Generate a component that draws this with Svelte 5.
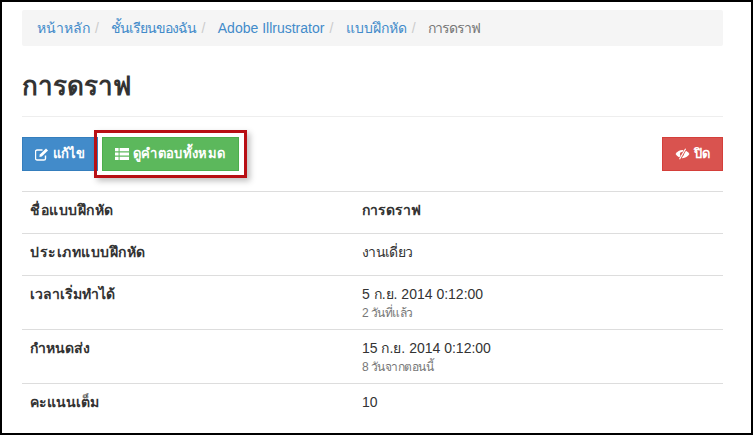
<script>
  const crumbs = [
    { text: 'หน้าหลัก' },
    { text: 'ชั้นเรียนของฉัน', tight: true },
    { text: 'Adobe Illrustrator' },
    { text: 'แบบฝึกหัด' }
  ]

  const rows = [
    { label: 'ชื่อแบบฝึกหัด', value: 'การดราฟ', strong: true, wide: true },
    { label: 'ประเภทแบบฝึกหัด', value: 'งานเดี่ยว', tight: true, wide: true },
    { label: 'เวลาเริ่มทำได้', value: '5 ก.ย. 2014 0:12:00', note: '2 วันที่แล้ว' },
    { label: 'กำหนดส่ง', value: '15 ก.ย. 2014 0:12:00', note: '8 วันจากตอนนี้' },
    { label: 'คะแนนเต็ม', value: '10' }
  ]
</script>

<div class="frame">
  <div class="page">
    <ol class="breadcrumb">
      {#each crumbs as crumb}
        <li><a href="#top" class:tight={crumb.tight}>{crumb.text}</a><span class="sep">/</span></li>
      {/each}
      <li class="current tight">การดราฟ</li>
    </ol>

    <h1 class="title">การดราฟ</h1>

    <div class="toolbar">
      <div class="toolbar-left">
        <button class="btn blue">
          <svg class="icon" viewBox="0 0 14 14" width="14" height="14">
            <path d="M10.500 8.500v2.900c0 .9-.7 1.600-1.600 1.600H2.100c-.9 0-1.600-.7-1.600-1.600V4.600C.5 3.700 1.200 3 2.100 3H7.500" fill="none" stroke="#fff" stroke-width="1.400" />
            <path d="M4.800 7.600 11 1.400l2 2L6.800 9.600l-2.400.4z" fill="#fff" />
          </svg>
          แก้ไข
        </button>
        <button class="btn green">
          <svg class="icon" viewBox="0 0 14 12" width="14" height="12">
            <path d="M0 0h3.600v3.200H0zM4.600 0H14v3.200H4.600zM0 4.400h3.600v3.200H0zM4.600 4.400H14v3.200H4.600zM0 8.800h3.600V12H0zM4.600 8.800H14V12H4.600z" fill="#fff" />
          </svg>
          ดูคำตอบทั้งหมด
        </button>
      </div>
      <button class="btn red">
        <svg class="icon" viewBox="0 0 16 12" width="15" height="12">
          <path d="M0.600 6C2.400 3.200 5 1.600 8 1.600s5.600 1.600 7.400 4.400c-1.800 2.800-4.400 4.400-7.400 4.400S2.400 8.800.6 6z" fill="#fff" />
          <circle cx="7.400" cy="6" r="2.200" fill="#d9534f" />
          <path d="M11.500.3 5 11.700" stroke="#d9534f" stroke-width="2.600" />
          <path d="M11.300.4 4.800 11.600" stroke="#fff" stroke-width="1.200" />
        </svg>
        ปิด
      </button>
    </div>

    <table class="details">
      <tbody>
        {#each rows as row}
          <tr>
            <th class:wide={row.wide}>{row.label}</th>
            <td class:strong={row.strong}>
              <span class:tight={row.tight}>{row.value}</span>
              {#if row.note}<small>{row.note}</small>{/if}
            </td>
          </tr>
        {/each}
      </tbody>
    </table>
  </div>

  <div class="callout"></div>
</div>

<style>
  :global(body) {
    margin: 0;
    background: #000;
  }

  .frame {
    position: relative;
    box-sizing: border-box;
    width: 753px;
    height: 435px;
    border: 2px solid #000;
    background: #fff;
    overflow: hidden;
    font-family: "Liberation Sans", "Noto Sans", sans-serif;
    font-size: 14px;
    line-height: 20px;
    color: #333;
  }

  .page {
    padding: 8px 28px 0 20px;
  }

  .breadcrumb {
    display: flex;
    margin: 0;
    padding: 8px 15px;
    list-style: none;
    background: #f5f5f5;
    border-radius: 2px;
  }

  .breadcrumb a {
    color: #428bca;
    text-decoration: none;
  }

  .sep {
    padding: 0 12.5px 0 5px;
    color: #ccc;
  }

  .current {
    color: #777;
  }

  .tight {
    letter-spacing: -1px;
  }

  .title {
    margin: 20px 0 0;
    padding-bottom: 9px;
    border-bottom: 1px solid #eee;
    font-size: 26px;
    line-height: 41px;
    font-weight: 700;
    color: #333;
  }

  .toolbar {
    display: flex;
    justify-content: space-between;
    margin-top: 20px;
  }

  .toolbar-left {
    display: flex;
    gap: 4px;
  }

  .btn {
    display: flex;
    align-items: center;
    gap: 4px;
    height: 34px;
    padding: 0 12px;
    border: 1px solid transparent;
    border-radius: 0;
    font: inherit;
    font-weight: 700;
    font-size: 13px;
    color: #fff;
  }

  .blue {
    background: #428bca;
    border-color: #357ebd;
  }

  .green {
    padding-right: 13px;
    letter-spacing: 0.33px;
    background: #5cb85c;
    border-color: #4cae4c;
  }

  .red {
    background: #d9534f;
    border-color: #d43f3a;
  }

  .details {
    width: 100%;
    margin-top: 20px;
    border-collapse: collapse;
  }

  .details th,
  .details td {
    padding: 6px 8px 10px;
    border-top: 1px solid #ddd;
    text-align: left;
    vertical-align: top;
    line-height: 25px;
  }

  .details th {
    width: 316px;
    font-weight: 700;
  }

  .details th.wide {
    letter-spacing: 0.5px;
  }

  .strong {
    font-weight: 700;
  }

  .strong .tight {
    letter-spacing: normal;
  }

  .details small {
    display: block;
    font-size: 12px;
    line-height: 12px;
    letter-spacing: -0.55px;
    color: #777;
  }

  .details td .tight {
    letter-spacing: -0.7px;
  }

  .callout {
    position: absolute;
    left: 92px;
    top: 128px;
    box-sizing: border-box;
    width: 153px;
    height: 48px;
    border: 3px solid #b80f14;
    box-shadow: 3px 3px 6px rgba(0, 0, 0, 0.25);
  }
</style>
